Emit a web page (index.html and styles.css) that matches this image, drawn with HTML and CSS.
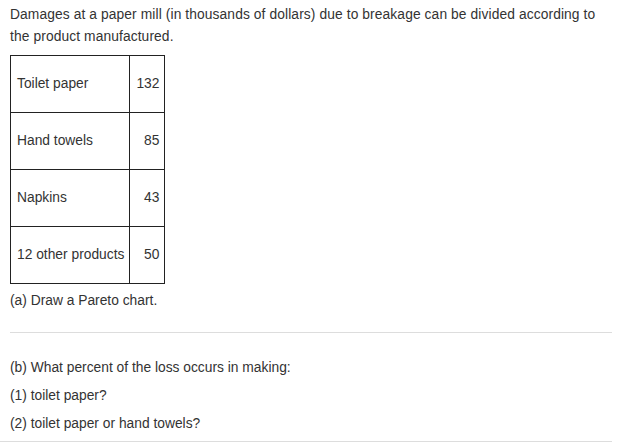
FILE: index.html
```html
<!DOCTYPE html>
<html>
<head>
<meta charset="utf-8">
<link rel="stylesheet" href="styles.css">
</head>
<body>
<div class="page">
  <p class="intro">Damages at a paper mill (in thousands of dollars) due to breakage can be divided according to the product manufactured.</p>
  <table class="data">
    <tr><td class="label">Toilet paper</td><td class="num">132</td></tr>
    <tr><td class="label">Hand towels</td><td class="num">85</td></tr>
    <tr><td class="label">Napkins</td><td class="num">43</td></tr>
    <tr><td class="label">12 other products</td><td class="num">50</td></tr>
  </table>
  <p class="part-a">(a) Draw a Pareto chart.</p>
  <div class="rule"></div>
  <div class="part-b">
    <p class="q">(b) What percent of the loss occurs in making:</p>
    <p class="q">(1) toilet paper?</p>
    <p class="q">(2) toilet paper or hand towels?</p>
  </div>
  <div class="rule bottom"></div>
</div>
</body>
</html>
```
FILE: styles.css
```css
html, body {
  margin: 0;
  padding: 0;
  background: #fff;
}
body {
  font-family: "Liberation Sans", Arial, sans-serif;
  font-size: 13.8px;
  color: #333;
}
.page {
  padding: 4px 5px 0 10px;
  width: 602px;
}
p {
  margin: 0;
}
.intro {
  line-height: 22px;
  padding-right: 12px;
  letter-spacing: 0.1px;
}
.data {
  border-collapse: collapse;
  margin-top: 7px;
}
.data td {
  border: 1px solid #222;
  height: 56px;
  padding: 0 5px 0 6px;
  vertical-align: middle;
  line-height: 16px;
}
.data td.num {
  text-align: right;
}
.part-a {
  line-height: 22px;
  margin-top: 6px;
}
.rule {
  height: 1px;
  background: #ddd;
  margin-top: 20px;
}
.part-b {
  padding-top: 24px;
}
.q {
  line-height: 22px;
  margin-bottom: 6px;
}
.rule.bottom {
  margin-top: 4px;
  margin-left: -10px;
  width: 612px;
}
```
